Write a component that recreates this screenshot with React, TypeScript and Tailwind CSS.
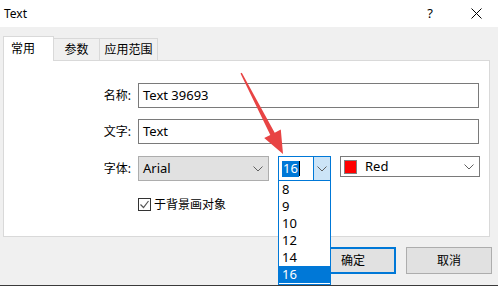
import React from "react";

const font = { fontFamily: "'Noto Sans', 'Noto Sans CJK SC', sans-serif" };

function Chevron({ className = "" }: { className?: string }) {
  return (
    <svg width="10" height="6" viewBox="0 0 10 6" className={className}>
      <path d="M0.5 0.5 L5 5 L9.5 0.5" fill="none" stroke="#606060" strokeWidth="1" />
    </svg>
  );
}

export default function App() {
  const sizes = ["8", "9", "10", "12", "14", "16"];
  return (
    <div
      className="relative w-[498px] h-[286px] bg-[#f0f0f0] overflow-hidden flex flex-col text-[#000] leading-none"
      style={font}
    >
      {/* title bar */}
      <div className="h-[27px] bg-white flex items-center pl-[4px] shrink-0">
        <span className="text-[12px]">Text</span>
        <span className="ml-auto text-[13px] mr-[38px]">?</span>
        <svg width="11" height="11" viewBox="0 0 11 11" className="mr-[16px]">
          <path d="M0.5 0.5 L10.5 10.5 M10.5 0.5 L0.5 10.5" stroke="#000" strokeWidth="1" />
        </svg>
      </div>

      {/* tabs */}
      <div className="pt-[9px] px-[3px] shrink-0">
        <div className="flex items-end h-[24px]">
          <div className="relative z-10 w-[51px] h-[25px] -mb-px bg-white border border-[#d9d9d9] border-b-0 flex items-start pt-[6px] pl-[7px] text-[12px]">
            常用
          </div>
          <div className="w-[47px] -ml-px h-[22px] bg-[#f0f0f0] border border-[#d9d9d9] border-b-0 flex items-center justify-center text-[12px]">
            参数
          </div>
          <div className="w-[59px] -ml-px h-[22px] bg-[#f0f0f0] border border-[#d9d9d9] border-b-0 flex items-center justify-center text-[12px]">
            应用范围
          </div>
        </div>

        {/* panel */}
        <div className="w-[487px] h-[177px] bg-white border border-[#d9d9d9] pt-[22px]">
          <div className="flex items-center h-[25px]">
            <div className="w-[130px] text-right pr-[3px] text-[12px]">名称:</div>
            <div className="ml-[4px] w-[341px] h-[25px] border border-[#7a7a7a] flex items-center pl-[4px] text-[13px]">
              Text 39693
            </div>
          </div>
          <div className="flex items-center h-[25px] mt-[11px]">
            <div className="w-[130px] text-right pr-[3px] text-[12px]">文字:</div>
            <div className="ml-[4px] w-[341px] h-[25px] border border-[#7a7a7a] flex items-center pl-[4px] text-[13px]">
              Text
            </div>
          </div>
          <div className="flex items-start h-[25px] mt-[12px]">
            <div className="w-[130px] h-[25px] flex items-center justify-end pr-[3px] text-[12px]">字体:</div>
            <div className="ml-[4px] w-[131px] h-[25px] border border-[#adadad] bg-[#e1e1e1] flex items-center pl-[4px] pr-[5px] text-[13px]">
              Arial
              <Chevron className="ml-auto" />
            </div>
            <div className="ml-[9px] w-[53px] h-[25px] border border-[#0078d7] flex items-stretch">
              <div className="flex-1 flex items-center pl-[3px]">
                <span className="bg-[#0078d7] text-white text-[13px] px-px h-[16px] flex items-center">16</span>
                <span className="w-px h-[15px] bg-[#000]" />
              </div>
              <div className="w-[17px] bg-[#cce4f7] border-l border-[#0078d7] flex items-center justify-center">
                <Chevron />
              </div>
            </div>
            <div className="ml-[9px] w-[140px] h-[21px] border border-[#7a7a7a] flex items-center pl-[3px] pr-[5px] text-[13px]">
              <span className="w-[13px] h-[14px] bg-[#ff0000] border border-[#808080]" />
              <span className="ml-[8px]">Red</span>
              <Chevron className="ml-auto" />
            </div>
          </div>
          <div className="flex items-center mt-[17px] pl-[134px]">
            <span className="w-[13px] h-[13px] border border-[#333] flex items-center justify-center">
              <svg width="11" height="11" viewBox="0 0 11 11">
                <path d="M1.5 5.5 L4.5 8.5 L9.5 2" fill="none" stroke="#555" strokeWidth="1.2" />
              </svg>
            </span>
            <span className="ml-[3px] text-[12px]">于背景画对象</span>
          </div>
        </div>
      </div>

      {/* buttons */}
      <div className="flex justify-end gap-[10px] pr-[6px] mt-[10px] shrink-0">
        <button className="w-[86px] h-[27px] bg-[#e1e1e1] border-2 border-[#0078d7] text-[12px]">确定</button>
        <button className="w-[86px] h-[27px] bg-[#e1e1e1] border border-[#adadad] text-[12px]">取消</button>
      </div>
      <div className="mt-auto h-[1px] bg-[#3a3a3a] shrink-0" />

      {/* dropdown list overlay */}
      <div className="absolute left-[278px] top-[181px] w-[53px] h-[104px] bg-white border border-t-0 border-[#0078d7] z-20 flex flex-col">
        {sizes.map((s) => (
          <div
            key={s}
            className={
              s === "16"
                ? "h-[17px] flex items-center pl-[3px] text-[13px] bg-[#0078d7] text-white"
                : "h-[17px] flex items-center pl-[3px] text-[13px]"
            }
          >
            {s}
          </div>
        ))}
      </div>

      {/* red arrow */}
      <svg className="absolute left-0 top-0 z-30 pointer-events-none" width="498" height="286">
        <polygon
          points="240.5,73.5 241.8,72.8 274.7,132.7 280.8,129.5 283,154 264.2,138 270.3,135"
          fill="#e84444"
        />
      </svg>
    </div>
  );
}
